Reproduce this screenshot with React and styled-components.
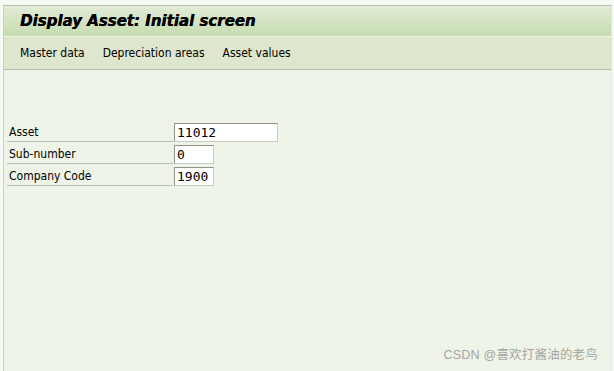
import React from 'react';
import styled, { createGlobalStyle } from 'styled-components';

const GlobalStyle = createGlobalStyle`
  html, body {
    margin: 0;
    padding: 0;
    background: #f7faf4;
  }
  body {
    font-family: "DejaVu Sans", "Liberation Sans", sans-serif;
  }
`;

const Frame = styled.div`
  width: 614px;
  height: 371px;
  box-sizing: border-box;
  padding: 5px 2px 0 3px;
  display: flex;
  flex-direction: column;
`;

const Screen = styled.div`
  flex: 1;
  display: flex;
  flex-direction: column;
  background: #eff4e9;
  border-top: 1px solid #b3bfa8;
  border-left: 1px solid #c9d2bf;
  border-right: 1px solid #e2e8da;
`;

const TitleBar = styled.div`
  height: 30px;
  display: flex;
  align-items: center;
  padding-left: 16px;
  background: linear-gradient(#e2ecd6, #c6dcb0);
  border-bottom: 1px solid #f2f6ec;
`;

const Title = styled.h1`
  margin: 0;
  font-family: "DejaVu Sans", sans-serif;
  font-size: 15px;
  font-weight: bold;
  font-style: italic;
  color: #000;
  text-shadow: 0.4px 0 0 #000;
`;

const MenuBar = styled.div`
  height: 32px;
  padding-left: 16px;
  display: flex;
  align-items: center;
  gap: 18px;
  background: #dee6cd;
  border-bottom: 1px solid #b4bea9;
`;

const MenuItem = styled.span`
  font-family: "DejaVu Sans Condensed", "DejaVu Sans", sans-serif;
  font-size: 12px;
  color: #000;
`;

const Form = styled.div`
  margin-top: 50px;
  padding-left: 3px;
  display: flex;
  flex-direction: column;
`;

const Row = styled.div`
  display: flex;
  align-items: flex-end;
`;

const Label = styled.div`
  width: 166px;
  height: 22px;
  box-sizing: border-box;
  padding: 3px 0 0 2px;
  display: flex;
  align-items: center;
  font-family: "DejaVu Sans Condensed", "DejaVu Sans", sans-serif;
  font-size: 12px;
  color: #000;
  border-bottom: 1px solid #b9c2b0;
  margin-right: 1px;
`;

const Field = styled.div`
  width: ${(p) => p.width}px;
  height: 19px;
  box-sizing: border-box;
  background: #fff;
  border: 1px solid #8f948b;
  border-right-color: #c8ccc4;
  border-bottom-color: #c8ccc4;
  font-family: "DejaVu Sans Mono", monospace;
  font-size: 13px;
  line-height: 17px;
  padding-left: 2px;
  color: #000;
`;

const Watermark = styled.div`
  margin-top: auto;
  align-self: flex-end;
  margin-right: 13px;
  margin-bottom: 8px;
  font-family: "Liberation Sans", "Noto Sans CJK SC", sans-serif;
  font-size: 12.5px;
  letter-spacing: 0.2px;
  color: #a3a69f;
`;

const fields = [
  { label: 'Asset', value: '11012', width: 104 },
  { label: 'Sub-number', value: '0', width: 40 },
  { label: 'Company Code', value: '1900', width: 40 },
];

export default function App() {
  return (
    <Frame>
      <GlobalStyle />
      <Screen>
        <TitleBar>
          <Title>Display Asset: Initial screen</Title>
        </TitleBar>
        <MenuBar>
          <MenuItem>Master data</MenuItem>
          <MenuItem>Depreciation areas</MenuItem>
          <MenuItem>Asset values</MenuItem>
        </MenuBar>
        <Form>
          {fields.map((f) => (
            <Row key={f.label}>
              <Label>{f.label}</Label>
              <Field width={f.width}>{f.value}</Field>
            </Row>
          ))}
        </Form>
        <Watermark>CSDN @喜欢打酱油的老鸟</Watermark>
      </Screen>
    </Frame>
  );
}
